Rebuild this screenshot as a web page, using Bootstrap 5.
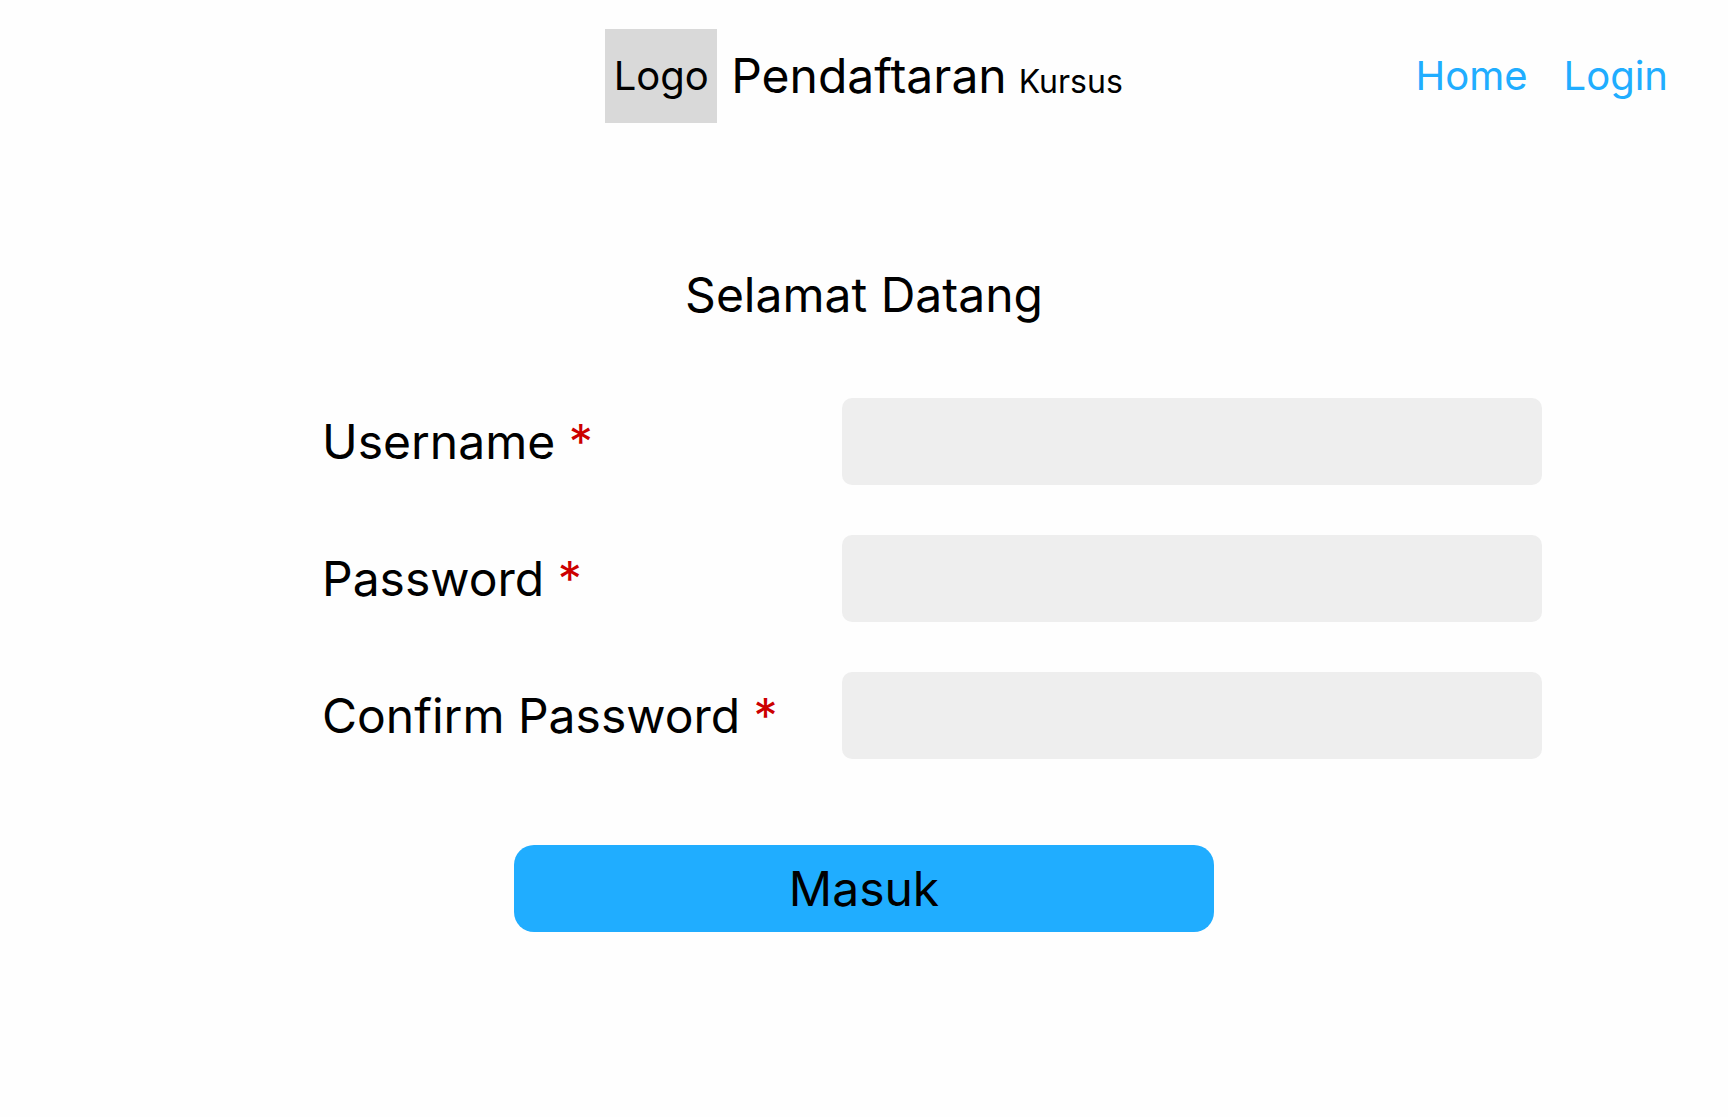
<!DOCTYPE html>
<html lang="id">
<head>
<meta charset="utf-8">
<meta name="viewport" content="width=device-width, initial-scale=1">
<title>Pendaftaran Kursus</title>
<link href="https://cdn.jsdelivr.net/npm/bootstrap@5.3.0/dist/css/bootstrap.min.css" rel="stylesheet">
<style>
body { font-family: Inter, "Liberation Sans", sans-serif; font-size: 48px; line-height: 58px; color: #000; background: #fefefe; }
.site-header { display: grid; grid-template-columns: 1fr auto 1fr; padding: 29px 60px; }
.site-brand { grid-column: 2; gap: 14px; color: #000; }
.brand-logo { width: 112px; height: 94px; background: #d9d9d9; font-size: 40px; line-height: 48px; }
.brand-name { gap: 12px; }
.brand-sub { font-size: 32px; line-height: 38px; }
.site-nav { gap: 36px; font-size: 40px; line-height: 48px; }
.site-nav a { color: #20adff; }
.page-title { font-size: 48px; line-height: 58px; margin: 114px 0 74px; }
.field-list { display: grid; gap: 50px; padding: 0 186px 0 322px; }
.field-line { display: grid; grid-template-columns: 1fr minmax(0, 700px); align-items: center; }
.required-star { color: #c00; }
.field-line .form-control { height: 87px; border: 0; border-radius: 10px; background: #eee; font-size: 40px; padding: 0 24px; }
.submit-btn { width: 700px; max-width: 100%; height: 87px; margin-top: 86px; padding: 0; border: 0; border-radius: 20px; font-size: 48px; line-height: 58px; color: #000; background: #20adff; }
.submit-btn:hover { background: #1a9ce8; color: #000; }
@media (max-width: 1400px) {
  .site-header { grid-template-columns: 1fr; justify-items: center; row-gap: 24px; padding: 24px; }
  .site-brand { grid-column: 1; flex-wrap: wrap; justify-content: center; }
  .field-list { padding: 0 24px; }
  .field-line { grid-template-columns: 1fr; row-gap: 12px; }
}
</style>
<script src="https://cdn.jsdelivr.net/npm/bootstrap@5.3.0/dist/js/bootstrap.bundle.min.js" defer></script>
</head>
<body>
<header class="site-header align-items-center">
  <a href="#" class="site-brand d-flex align-items-center text-decoration-none">
    <span class="brand-logo d-flex align-items-center justify-content-center">Logo</span>
    <span class="brand-name d-flex align-items-baseline">
      <span>Pendaftaran</span>
      <span class="brand-sub">Kursus</span>
    </span>
  </a>
  <nav class="site-nav d-flex justify-content-end" aria-label="Menu">
    <a href="#" class="text-decoration-none">Home</a>
    <a href="#" class="text-decoration-none">Login</a>
  </nav>
</header>
<main>
  <h1 class="page-title text-center fw-normal">Selamat Datang</h1>
  <form>
    <div class="field-list">
      <div class="field-line">
        <label for="username">Username <span class="required-star">*</span></label>
        <input type="text" class="form-control" id="username" required>
      </div>
      <div class="field-line">
        <label for="password">Password <span class="required-star">*</span></label>
        <input type="password" class="form-control" id="password" required>
      </div>
      <div class="field-line">
        <label for="confirm">Confirm Password <span class="required-star">*</span></label>
        <input type="password" class="form-control" id="confirm" required>
      </div>
    </div>
    <div class="d-flex justify-content-center">
      <button type="submit" class="btn submit-btn">Masuk</button>
    </div>
  </form>
</main>
</body>
</html>
